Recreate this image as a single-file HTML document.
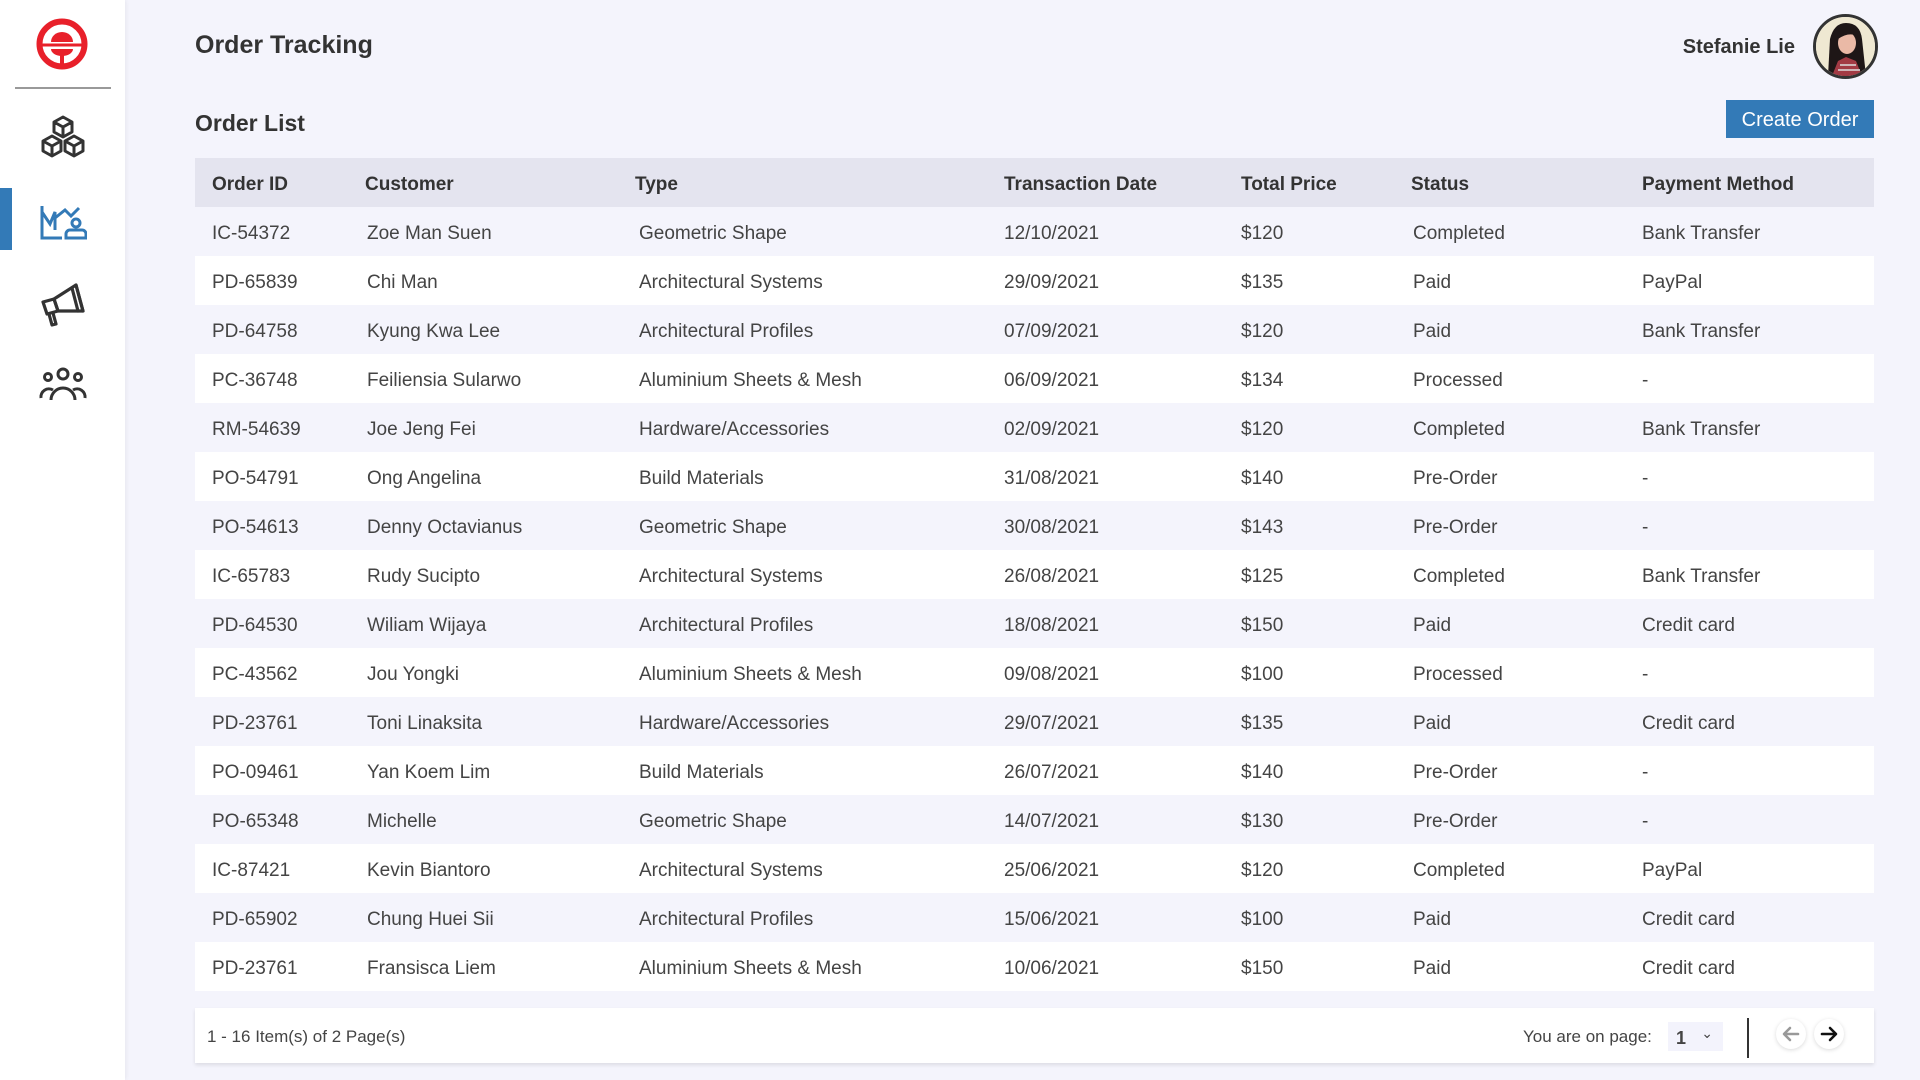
<!DOCTYPE html>
<html><head><meta charset="utf-8"><style>
*{box-sizing:border-box;margin:0;padding:0}
body{width:1920px;height:1080px;background:#f4f4fc;font-family:"Liberation Sans",sans-serif;color:#333;position:relative;overflow:hidden}
.side{position:absolute;left:0;top:0;width:125px;height:1080px;background:#fff;box-shadow:1px 0 4px rgba(0,0,0,.06)}
.div{position:absolute;left:15px;top:87px;width:96px;height:2px;background:#999}
.act{position:absolute;left:0;top:188px;width:12px;height:62px;background:#337ab7}
.ic{position:absolute;left:39px;width:48px;height:48px}
h1{position:absolute;left:195px;top:31px;font-size:25px;font-weight:bold;color:#333}
h2{position:absolute;left:195px;top:110px;font-size:23px;font-weight:bold;color:#333}
.name{position:absolute;right:125px;top:36px;font-size:20px;font-weight:bold;color:#333}
.av{position:absolute;left:1813px;top:14px;width:65px;height:65px;border-radius:50%;border:3px solid #333;overflow:hidden;background:#f3ecd9}
.btn{position:absolute;left:1726px;top:100px;width:148px;height:38px;background:#337ab7;color:#fff;font-size:20px;text-align:center;line-height:40px}
table{position:absolute;left:195px;top:158px;width:1679px;border-collapse:collapse;font-size:19px;table-layout:fixed}
th{background:#e4e4ef;height:49px;text-align:left;font-weight:bold;color:#333;padding-top:4px}
td{height:49px;color:#444;padding-top:4px}
tr:nth-child(odd) td{background:#fff}
th:nth-child(1),td:nth-child(1){padding-left:17px;width:170px}
th:nth-child(2){width:270px;padding-left:0}
td:nth-child(2){padding-left:2px}
th:nth-child(3){width:369px}td:nth-child(3){padding-left:4px}
th:nth-child(4){width:237px}td:nth-child(4){padding-left:0}
th:nth-child(5){width:170px}
th:nth-child(6){width:231px}td:nth-child(6){padding-left:2px}
.foot{position:absolute;left:195px;top:1008px;width:1679px;height:55px;background:#fff;box-shadow:0 2px 4px rgba(0,0,0,.1);font-size:17px;color:#444}
.foot .l{position:absolute;left:12px;top:19px}
.foot .r{position:absolute;left:1328px;top:19px}
.sel{position:absolute;left:1473px;top:14px;width:55px;height:29px;background:#f3f3fc;font-size:18px;font-weight:bold;padding:6px 0 0 8px}
.sel span{position:absolute;right:10px;top:3px;font-weight:normal;font-size:14px}
.bar{position:absolute;left:1552px;top:10px;width:2px;height:40px;background:#333}
.pb{position:absolute;top:11px;width:30px;height:30px;border-radius:50%;background:#fff;box-shadow:0 1px 4px rgba(0,0,0,.15)}
</style></head><body>
<div class="side">
<svg style="position:absolute;left:35px;top:17px" width="54" height="54" viewBox="0 0 54 54"><circle cx="27" cy="27" r="22.5" fill="none" stroke="#e8202a" stroke-width="6"/><path d="M16 25 A11 10 0 0 1 38 25 Z" fill="#e8202a"/><rect x="5" y="26.5" width="42" height="3" fill="#e8202a"/><path d="M16 32 H38 A11 7 0 0 1 16 32 Z" fill="#e8202a"/><rect x="25" y="35" width="4" height="14" fill="#e8202a"/></svg>
<div class="div"></div>
<svg class="ic" style="top:114px" viewBox="0 0 48 48" fill="none" stroke="#333" stroke-width="3" stroke-linejoin="round"><path d="M24 3l9 5v10l-9 5-9-5V8z M15 8l9 5 9-5 M24 13v10"/><path d="M13 22l9 5v10l-9 5-9-5V27z M4 27l9 5 9-5 M13 32v10"/><path d="M35 22l9 5v10l-9 5-9-5V27z M26 27l9 5 9-5 M35 32v10"/></svg>
<div class="act"></div>
<svg class="ic" style="top:196px" viewBox="0 0 48 48" fill="none" stroke="#337ab7" stroke-width="3"><path d="M3 10v32h20 M3 34l0-18 8 12 5-12v18 M16 22l10-8 6 6 8-8"/><circle cx="37" cy="27" r="4"/><path d="M27 42v-4a4 4 0 0 1 4-4h12a4 4 0 0 1 4 4v4z"/></svg>
<svg class="ic" style="top:280px" viewBox="0 0 48 48" fill="none" stroke="#333" stroke-width="3.2" stroke-linejoin="round" stroke-linecap="round"><path d="M4 22l11-3 4 12-11 3z"/><path d="M15 19L37 5l7 26-25 0z"/><path d="M37 5l7 26"/><path d="M33 8l6 23"/><path d="M10 34l3 11 4-1-3-11"/></svg>
<svg class="ic" style="top:362px" viewBox="0 0 48 48" fill="none" stroke="#333" stroke-width="3"><circle cx="24" cy="12" r="5"/><circle cx="9" cy="15" r="3.5"/><circle cx="39" cy="15" r="3.5"/><path d="M12 38a12 12 0 0 1 24 0 M2 36a8 8 0 0 1 12-8 M46 36a8 8 0 0 0-12-8"/></svg>
</div>
<h1>Order Tracking</h1>
<div class="name">Stefanie Lie</div>
<div class="av"><svg width="59" height="59" viewBox="0 0 59 59"><rect width="59" height="59" fill="#efe8d2"/><path d="M12 59 L14 22 Q18 6 30 6 Q44 6 46 22 L50 59z" fill="#1e1616"/><ellipse cx="31" cy="26" rx="9" ry="11" fill="#eab9a6"/><path d="M20 20 Q30 8 42 20 Q34 14 22 22z" fill="#1e1616"/><path d="M16 59 L22 44 L30 40 L40 44 L46 59z" fill="#a23a44"/><path d="M24 48h16M22 53h22" stroke="#ddd" stroke-width="1.5"/></svg></div>
<h2>Order List</h2>
<div class="btn">Create Order</div>
<table>
<tr><th>Order ID</th><th>Customer</th><th>Type</th><th>Transaction Date</th><th>Total Price</th><th>Status</th><th>Payment Method</th></tr>
<tr><td>IC-54372</td><td>Zoe Man Suen</td><td>Geometric Shape</td><td>12/10/2021</td><td>$120</td><td>Completed</td><td>Bank Transfer</td></tr>
<tr><td>PD-65839</td><td>Chi Man</td><td>Architectural Systems</td><td>29/09/2021</td><td>$135</td><td>Paid</td><td>PayPal</td></tr>
<tr><td>PD-64758</td><td>Kyung Kwa Lee</td><td>Architectural Profiles</td><td>07/09/2021</td><td>$120</td><td>Paid</td><td>Bank Transfer</td></tr>
<tr><td>PC-36748</td><td>Feiliensia Sularwo</td><td>Aluminium Sheets &amp; Mesh</td><td>06/09/2021</td><td>$134</td><td>Processed</td><td>-</td></tr>
<tr><td>RM-54639</td><td>Joe Jeng Fei</td><td>Hardware/Accessories</td><td>02/09/2021</td><td>$120</td><td>Completed</td><td>Bank Transfer</td></tr>
<tr><td>PO-54791</td><td>Ong Angelina</td><td>Build Materials</td><td>31/08/2021</td><td>$140</td><td>Pre-Order</td><td>-</td></tr>
<tr><td>PO-54613</td><td>Denny Octavianus</td><td>Geometric Shape</td><td>30/08/2021</td><td>$143</td><td>Pre-Order</td><td>-</td></tr>
<tr><td>IC-65783</td><td>Rudy Sucipto</td><td>Architectural Systems</td><td>26/08/2021</td><td>$125</td><td>Completed</td><td>Bank Transfer</td></tr>
<tr><td>PD-64530</td><td>Wiliam Wijaya</td><td>Architectural Profiles</td><td>18/08/2021</td><td>$150</td><td>Paid</td><td>Credit card</td></tr>
<tr><td>PC-43562</td><td>Jou Yongki</td><td>Aluminium Sheets &amp; Mesh</td><td>09/08/2021</td><td>$100</td><td>Processed</td><td>-</td></tr>
<tr><td>PD-23761</td><td>Toni Linaksita</td><td>Hardware/Accessories</td><td>29/07/2021</td><td>$135</td><td>Paid</td><td>Credit card</td></tr>
<tr><td>PO-09461</td><td>Yan Koem Lim</td><td>Build Materials</td><td>26/07/2021</td><td>$140</td><td>Pre-Order</td><td>-</td></tr>
<tr><td>PO-65348</td><td>Michelle</td><td>Geometric Shape</td><td>14/07/2021</td><td>$130</td><td>Pre-Order</td><td>-</td></tr>
<tr><td>IC-87421</td><td>Kevin Biantoro</td><td>Architectural Systems</td><td>25/06/2021</td><td>$120</td><td>Completed</td><td>PayPal</td></tr>
<tr><td>PD-65902</td><td>Chung Huei Sii</td><td>Architectural Profiles</td><td>15/06/2021</td><td>$100</td><td>Paid</td><td>Credit card</td></tr>
<tr><td>PD-23761</td><td>Fransisca Liem</td><td>Aluminium Sheets &amp; Mesh</td><td>10/06/2021</td><td>$150</td><td>Paid</td><td>Credit card</td></tr>
</table>
<div class="foot">
<div class="l">1 - 16 Item(s) of 2 Page(s)</div>
<div class="r">You are on page:</div>
<div class="sel">1<span>&#8964;</span></div>
<div class="bar"></div>
<div class="pb" style="left:1581px"><svg width="30" height="30" viewBox="0 0 30 30" fill="none" stroke="#999" stroke-width="2.6" stroke-linecap="round" stroke-linejoin="round"><path d="M22 15H9M14 9l-6 6 6 6"/></svg></div>
<div class="pb" style="left:1619px"><svg width="30" height="30" viewBox="0 0 30 30" fill="none" stroke="#111" stroke-width="2.6" stroke-linecap="round" stroke-linejoin="round"><path d="M8 15h13M16 9l6 6-6 6"/></svg></div>
</div>
</body></html>
